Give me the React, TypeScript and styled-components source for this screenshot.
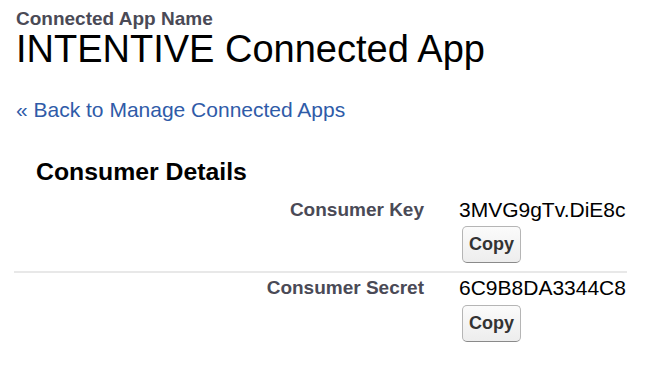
import React from "react";
import styled, { createGlobalStyle } from "styled-components";

const GlobalStyle = createGlobalStyle`
  html, body { margin: 0; padding: 0; background: #ffffff; }
  body { font-family: "Liberation Sans", Arial, sans-serif; }
`;

const Page = styled.div`
  padding: 9px 0 0 16px;
  width: 668px;
  height: 376px;
  box-sizing: border-box;
  overflow: hidden;
`;

const TypeLabel = styled.div`
  font-size: 19px;
  line-height: 19px;
  font-weight: bold;
  color: #4a4a56;
`;

const Title = styled.h1`
  margin: 1.5px 0 0 0;
  font-size: 38px;
  line-height: 38px;
  font-weight: normal;
  color: #000000;
`;

const BackLink = styled.a`
  display: block;
  margin-top: 31.2px;
  font-size: 21px;
  line-height: 22px;
  color: #2f5ba8;
  text-decoration: none;
`;

const Section = styled.div`
  margin: 38px 0 0 -2px;
  width: 613px;
`;

const SectionTitle = styled.h2`
  margin: 0 0 10px 22px;
  font-size: 24.8px;
  line-height: 26px;
  font-weight: bold;
  color: #000000;
`;

const Row = styled.div<{ $last?: boolean }>`
  display: grid;
  grid-template-columns: 410px 168px;
  column-gap: 35px;
  padding: 4px 0 8px 0;
  border-bottom: ${(p) => (p.$last ? "none" : "2px solid #e8e8e8")};
`;

const Label = styled.div`
  text-align: right;
  font-size: 19px;
  line-height: 22px;
  font-weight: bold;
  color: #4a4a56;
`;

const ValueCell = styled.div`
  display: flex;
  flex-direction: column;
  align-items: flex-start;
  overflow: hidden;
`;

const Value = styled.div`
  font-size: 21px;
  line-height: 22px;
  color: #000000;
  white-space: nowrap;
`;

const CopyButton = styled.button`
  margin: 5.6px 0 0 3px;
  width: 59px;
  height: 37px;
  padding: 0;
  box-sizing: border-box;
  border: 1px solid #b5b5b5;
  border-bottom-color: #8a8a8a;
  border-radius: 5px;
  background: linear-gradient(#fbfbfb, #ededed);
  font-family: "Liberation Sans", Arial, sans-serif;
  font-size: 18px;
  font-weight: bold;
  color: #333333;
`;

const rows = [
  { label: "Consumer Key", value: "3MVG9gTv.DiE8c" },
  { label: "Consumer Secret", value: "6C9B8DA3344C8" },
];

export default function App() {
  return (
    <>
      <GlobalStyle />
      <Page>
        <TypeLabel>Connected App Name</TypeLabel>
        <Title>INTENTIVE Connected App</Title>
        <BackLink href="#">« Back to Manage Connected Apps</BackLink>
        <Section>
          <SectionTitle>Consumer Details</SectionTitle>
          {rows.map((r, i) => (
            <Row key={r.label} $last={i === rows.length - 1}>
              <Label>{r.label}</Label>
              <ValueCell>
                <Value>{r.value}</Value>
                <CopyButton>Copy</CopyButton>
              </ValueCell>
            </Row>
          ))}
        </Section>
      </Page>
    </>
  );
}
